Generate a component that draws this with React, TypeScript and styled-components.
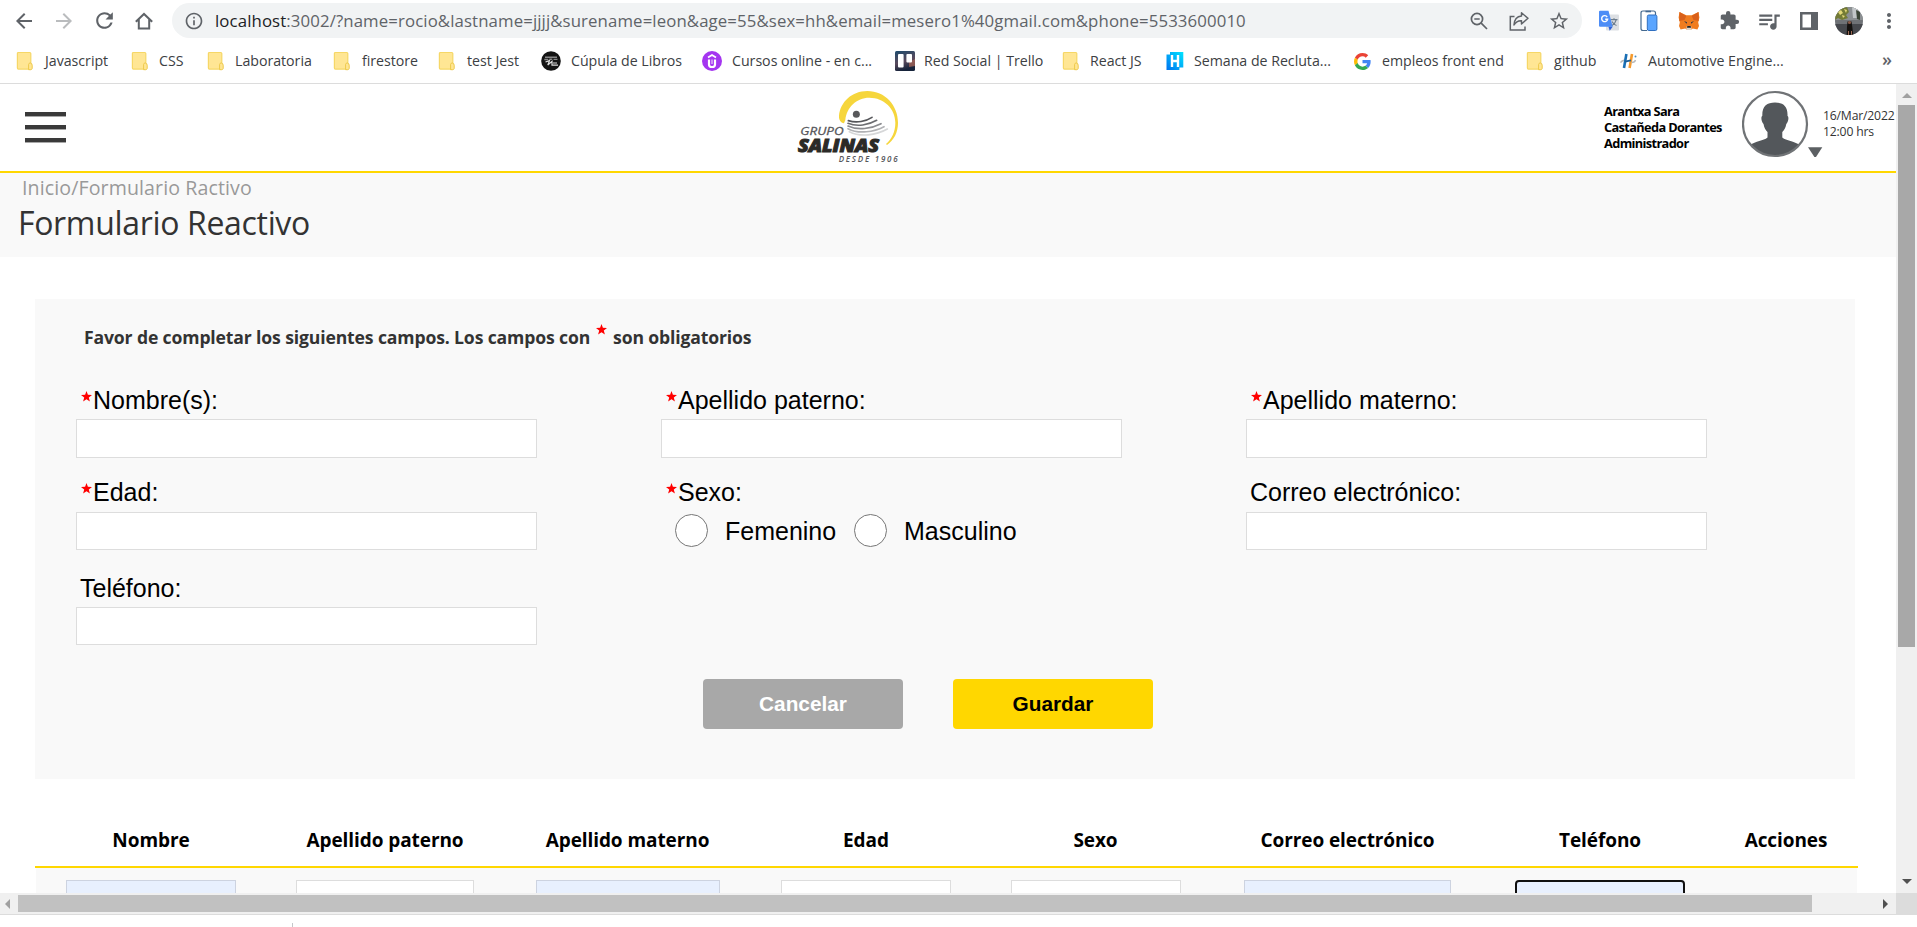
import React from "react";
import styled, { createGlobalStyle } from "styled-components";
import {
  MdArrowBack,
  MdArrowForward,
  MdRefresh,
  MdInfoOutline,
  MdStarBorder,
  MdExtension,
  MdQueueMusic,
  MdMoreVert,
} from "react-icons/md";

const UI = `"Open Sans", "Noto Sans", sans-serif`;
const ARIAL = `"Liberation Sans", Arial, sans-serif`;
const GOLD = "#ffd700";

const GlobalStyle = createGlobalStyle`
  * { box-sizing: border-box; }
  html, body { margin: 0; padding: 0; background: #fff; overflow: hidden; }
  svg { display: block; flex: none; }
`;

const Window = styled.div`
  width: 1917px;
  height: 927px;
  display: flex;
  flex-direction: column;
  overflow: hidden;
  background: #fff;
  font-family: ${UI};
`;

/* ---------- browser chrome ---------- */

const Toolbar = styled.div`
  height: 41px;
  display: flex;
  align-items: center;
  padding-left: 4px;
  color: #5f6368;
`;

const Slot = styled.div<{ $dim?: boolean }>`
  width: 40px;
  height: 41px;
  flex: none;
  display: flex;
  align-items: center;
  justify-content: center;
  color: ${(p) => (p.$dim ? "#babcbe" : "#5f6368")};
`;

const Omnibox = styled.div`
  width: 1410px;
  height: 35px;
  margin: 0 7px 0 8px;
  padding: 0 3px 0 12px;
  display: flex;
  align-items: center;
  border-radius: 18px;
  background: #f1f3f4;
`;

const Url = styled.div`
  flex: 1;
  margin-left: 11px;
  font-size: 16.8px;
  line-height: 34px;
  letter-spacing: 0.11px;
  white-space: nowrap;
  color: #5f6368;
  b { font-weight: 400; color: #202124; }
`;

const BookmarksBar = styled.div`
  height: 43px;
  flex: none;
  display: flex;
  padding: 9px 25px 0 16px;
  border-bottom: 1px solid #dcdcdc;
`;

const Bookmark = styled.div<{ $width: number; $gap: number }>`
  width: ${(p) => p.$width}px;
  height: 22px;
  flex: none;
  display: flex;
  align-items: center;
  gap: ${(p) => p.$gap}px;
  font-size: 14.2px;
  line-height: 22px;
  letter-spacing: -0.02px;
  white-space: nowrap;
  color: #3c4043;
`;

const Overflow = styled.div`
  margin-left: auto;
  font-size: 18px;
  line-height: 19px;
  font-weight: 600;
  color: #5f6368;
`;

/* ---------- viewport and scrollbars ---------- */

const Viewport = styled.div`
  height: 809px;
  flex: none;
  display: flex;
`;

const Page = styled.div`
  width: 1896px;
  height: 809px;
  overflow: hidden;
  display: flex;
  flex-direction: column;
`;

const VScroll = styled.div`
  width: 21px;
  height: 809px;
  padding: 8px 2px 9px 2px;
  display: flex;
  flex-direction: column;
  align-items: center;
  background: #f0f0f0;
`;

const VThumb = styled.div`
  width: 17px;
  height: 542px;
  margin: 7px 0 auto;
  background: #a8a8a8;
`;

const HScroll = styled.div`
  height: 22px;
  flex: none;
  display: flex;
  border-bottom: 1px solid #dcdcdc;
  background: #f0f0f0;
`;

const HTrack = styled.div`
  width: 1896px;
  display: flex;
  align-items: center;
  justify-content: space-between;
  padding: 0 8px 0 5px;
`;

const HThumb = styled.div`
  width: 1794px;
  height: 17px;
  margin: 0 auto 0 8px;
  background: #c1c1c1;
`;

const ScrollCorner = styled.div`
  width: 21px;
  height: 22px;
  background: #dcdcdc;
`;

const DownloadShelf = styled.div`
  height: 12px;
  padding: 8px 0 0 292px;
`;

const ShelfDivider = styled.div`
  width: 1px;
  height: 4px;
  background: #c4c7ca;
`;

/* ---------- app header ---------- */

const Header = styled.header`
  height: 89px;
  flex: none;
  padding-bottom: 0;
  display: flex;
  border-bottom: 2px solid ${GOLD};
`;

const MenuButton = styled.div`
  width: 66px;
  padding: 28px 0 0 25px;
  display: flex;
  flex-direction: column;
  gap: 8px;
`;

const MenuBar = styled.span`
  height: 5px;
  background: linear-gradient(#3a3a3a 75%, #a8a8a8 75%);
`;

const LogoBox = styled.div`
  width: 180px;
  margin: -4px 0 0 714px;
`;

const UserName = styled.div`
  width: 138px;
  margin-left: 644px;
  padding-top: 19px;
  font-size: 12.8px;
  font-weight: 700;
  line-height: 16px;
  letter-spacing: -0.65px;
  white-space: nowrap;
  color: #000;
`;

const UserPicture = styled.div`
  width: 81px;
  padding-top: 6px;
`;

const DateTime = styled.div`
  padding-top: 24px;
  font-size: 12.2px;
  line-height: 16px;
  letter-spacing: -0.18px;
  white-space: nowrap;
  color: #333;
`;

const TitleBand = styled.div`
  height: 84px;
  flex: none;
  background: #f9f9f9;
`;

const Breadcrumb = styled.div`
  height: 30px;
  padding-left: 22px;
  font-size: 19.6px;
  line-height: 30px;
  letter-spacing: 0.1px;
  white-space: nowrap;
  color: #999;
`;

const Title = styled.h1`
  margin: 0;
  padding-left: 18px;
  font-size: 32px;
  font-weight: 400;
  line-height: 40px;
  letter-spacing: -0.33px;
  white-space: nowrap;
  color: #333;
`;

/* ---------- form ---------- */

const FormCard = styled.form`
  width: 1820px;
  height: 480px;
  flex: none;
  margin: 42px 0 0 35px;
  padding: 23px 0 0 41px;
  background: #f9f9f9;
`;

const Hint = styled.div`
  display: flex;
  align-items: center;
  height: 30px;
  padding-left: 8px;
  font-size: 17.6px;
  font-weight: 700;
  letter-spacing: -0.14px;
  white-space: nowrap;
  color: #333;
  svg { margin: -15px 6px 0 6px; }
`;

const Fields = styled.div`
  display: grid;
  grid-template-columns: 585px 585px 461px;
  grid-template-rows: 93px 95px 92px;
  padding-top: 34px;
`;

const Field = styled.div`
  width: 461px;
  display: flex;
  flex-direction: column;
`;

const Label = styled.label<{ $raised?: boolean }>`
  height: 33px;
  display: flex;
  padding-left: 4px;
  font-family: ${ARIAL};
  font-size: 25px;
  line-height: ${(p) => (p.$raised ? 26 : 28)}px;
  white-space: nowrap;
  color: #000;
  svg { margin: ${(p) => (p.$raised ? 4 : 5)}px 1px 0 1px; }
`;

const TextBox = styled.div<{ $height: number }>`
  height: ${(p) => p.$height}px;
  border: 1px solid #ddd;
  background: #fff;
`;

const Radios = styled.div`
  height: 37px;
  display: flex;
  align-items: center;
  padding-left: 14px;
  font-family: ${ARIAL};
  font-size: 25px;
  color: #000;
`;

const Radio = styled.span`
  width: 33px;
  height: 33px;
  margin-right: 17px;
  border: 1px solid #767676;
  border-radius: 50%;
  background: #fff;
`;

const RadioText = styled.span`
  width: 129px;
  line-height: 36px;
`;

const Actions = styled.div`
  display: flex;
  gap: 50px;
  padding: 13px 0 0 627px;
`;

const Button = styled.div<{ $primary?: boolean }>`
  width: 200px;
  height: 50px;
  border-radius: 4px;
  background: ${(p) => (p.$primary ? GOLD : "#a8a8a8")};
  color: ${(p) => (p.$primary ? "#000" : "#fff")};
  font-family: ${ARIAL};
  font-size: 20.8px;
  font-weight: 700;
  line-height: 50px;
  text-align: center;
`;

/* ---------- table ---------- */

const Columns = styled.div`
  display: grid;
  grid-template-columns: 230px 238px 247px 230px 229px 275px 230px 142px;
  justify-items: center;
`;

const HeadRow = styled(Columns)`
  width: 1823px;
  height: 89px;
  flex: none;
  margin-left: 35px;
  padding: 46px 0 0 1px;
  border-bottom: 2px solid ${GOLD};
  font-size: 19px;
  font-weight: 700;
  line-height: 31px;
  letter-spacing: -0.08px;
  white-space: nowrap;
  color: #000;
`;

const BodyRow = styled(Columns)`
  width: 1821px;
  height: 60px;
  flex: none;
  margin-left: 36px;
  padding-top: 12px;
  background: #f9f9f9;
`;

const CellInput = styled.div<{ $width: number; $state: string }>`
  width: ${(p) => p.$width}px;
  height: 38px;
  border: ${(p) =>
    p.$state === "focus" ? "2px solid #101010" : p.$state === "filled" ? "1px solid #cdd3e0" : "1px solid #ddd"};
  border-radius: ${(p) => (p.$state === "focus" ? "4px" : "0")};
  background: ${(p) => (p.$state === "plain" ? "#fff" : "#e8f0fe")};
`;

/* ---------- drawings ---------- */

const HomeIcon = () => (
  <svg width="20" height="20" viewBox="0 0 20 20" fill="none" stroke="#5f6368" strokeWidth="2">
    <path d="M1.800 10.800L10 3l8.200 7.800M4.800 8.500V17.500h10.400V8.500" />
  </svg>
);

const ZoomOutIcon = () => (
  <svg width="20" height="20" viewBox="0 0 20 20" fill="none" stroke="#5f6368" strokeWidth="1.700">
    <circle cx="8" cy="8" r="5.600" />
    <path d="M12.200 12.200L18 18M5.300 8h5.400" />
  </svg>
);

const FolderIcon = () => (
  <svg width="18" height="20" viewBox="0 0 18 20">
    <rect x="1.4" y="1.5" width="13.4" height="16.6" rx="1" fill="#ffe694" stroke="#f6d767" strokeWidth="1.2" />
    <path d="M12.6 13.4q.3-1.4 1.600-1.500 2 .3 2 2.400v3.200q-.2 1-1.500 1.200h-2.100z" fill="#ffe694" stroke="#eec94a" strokeWidth="1" />
  </svg>
);

const CupulaIcon = () => (
  <svg width="20" height="20" viewBox="0 0 20 20">
    <circle cx="10" cy="10" r="9.8" fill="#141414" />
    <path d="M4 6.2h12M3.3 8.5h4M8.3 8.3h3M12.5 8.4h4" stroke="#888" strokeWidth="1.4" />
    <path d="M4.5 11l4-1.400L6.800 14l4.200-3.600v3.800h6M12 12h4" fill="none" stroke="#ddd" strokeWidth="1.2" />
  </svg>
);

const CursosIcon = () => (
  <svg width="20" height="20" viewBox="0 0 20 20">
    <circle cx="10" cy="10" r="10" fill="#a435f0" />
    <path d="M6 6.400L10 4l4 2.400" fill="none" stroke="#fff" strokeWidth="1.800" />
    <path d="M7 8.400v5q0 2.600 3 2.600t3-2.600v-5" fill="none" stroke="#fff" strokeWidth="2.200" />
    <path d="M10 8.500v4.500" stroke="#e9d0fb" strokeWidth="1.200" />
  </svg>
);

const TrelloIcon = () => (
  <svg width="20" height="20" viewBox="0 0 20 20">
    <defs>
      <linearGradient id="dusk" x1="0" y1="0" x2="0.3" y2="1">
        <stop offset="0" stopColor="#1d4a6c" />
        <stop offset="0.6" stopColor="#5a4a5c" />
        <stop offset="1" stopColor="#16233a" />
      </linearGradient>
    </defs>
    <rect width="20" height="20" rx="1.5" fill="url(#dusk)" />
    <path d="M14 11l6-3v7l-6 1z" fill="#b06a5a" opacity=".7" />
    <rect x="3" y="3" width="5.6" height="13.6" rx="1" fill="#fff" />
    <rect x="11.4" y="3" width="5.6" height="8.6" rx="1" fill="#fff" />
  </svg>
);

const HIcon = () => (
  <svg width="18" height="20" viewBox="0 0 18 20">
    <defs>
      <linearGradient id="sky" x1="1" y1="0" x2="0" y2="1">
        <stop offset="0" stopColor="#00e5ff" />
        <stop offset="1" stopColor="#0072f0" />
      </linearGradient>
    </defs>
    <path d="M0.5 3.5H4V1h13.300v15.400H13.400V19H.5z" fill="url(#sky)" />
    <path d="M6 4v12M12 4v12M6 10h6" stroke="#fff" strokeWidth="2.4" />
  </svg>
);

const GoogleIcon = () => (
  <svg width="17" height="17" viewBox="0 0 48 48">
    <path fill="#EA4335" d="M24 9.5c3.54 0 6.71 1.22 9.21 3.6l6.85-6.85C35.9 2.38 30.47 0 24 0 14.62 0 6.51 5.38 2.56 13.22l7.98 6.19C12.43 13.72 17.74 9.5 24 9.5z" />
    <path fill="#4285F4" d="M46.98 24.55c0-1.57-.15-3.09-.38-4.55H24v9.02h12.94c-.58 2.96-2.26 5.48-4.78 7.18l7.73 6c4.51-4.18 7.09-10.36 7.09-17.65z" />
    <path fill="#FBBC05" d="M10.53 28.59c-.48-1.45-.76-2.99-.76-4.59s.27-3.14.76-4.59l-7.98-6.19C.92 16.46 0 20.12 0 24c0 3.88.92 7.54 2.56 10.78l7.97-6.19z" />
    <path fill="#34A853" d="M24 48c6.48 0 11.93-2.13 15.89-5.81l-7.73-6c-2.15 1.45-4.92 2.3-8.16 2.3-6.26 0-11.57-4.22-13.47-9.91l-7.98 6.19C6.51 42.62 14.62 48 24 48z" />
  </svg>
);

const AutomotiveIcon = () => (
  <svg width="18" height="18" viewBox="0 0 18 18">
    <path d="M6.400 2L4 16" stroke="#1a6fb5" strokeWidth="2.600" />
    <path d="M12 2L9.600 16" stroke="#f59a2d" strokeWidth="2.600" />
    <path d="M4.800 9.700L11 8.300" stroke="#1a5f9a" strokeWidth="1.800" />
    <path d="M.5 10.500Q2 8.500 4 8.200M11.500 10.500q3.500 0 4-2.500" fill="none" stroke="#b7b9bb" strokeWidth="1.400" />
    <circle cx="15.500" cy="4.500" r="1" fill="#4b8ec4" />
  </svg>
);

const ShareIcon = () => (
  <svg width="22" height="22" viewBox="0 0 22 22" fill="none" stroke="#5f6368" strokeWidth="1.500">
    <path d="M6.500 6.500H2.300V20H17V16.500" />
    <path d="M13.500 2.800L20 8.300 13.500 14v-3.300C10.500 10.500 7.800 11.800 6 15 6.300 9.800 9 6.400 13.500 6z" strokeLinejoin="round" />
  </svg>
);

const TranslateIcon = () => (
  <svg width="22" height="22" viewBox="0 0 22 22">
    <rect x="8" y="4.500" width="13" height="16" rx="1" fill="#dcdfe3" />
    <path d="M12.500 9.700h7M16 8.200v1.500M18.300 9.700q-1 4-4.500 6M14 11.500q1.500 3 4.500 4" stroke="#6d7d8d" strokeWidth="1.200" fill="none" />
    <path d="M2 .8h8.500l4.200 16H2q-1 0-1-1V1.800q0-1 1-1z" fill="#4d8df6" />
    <path d="M10.500 16.800h4.200l-3 4z" fill="#2f62d8" />
    <path d="M9.200 7A3 3 0 1 0 9.600 9.300H7.200" fill="none" stroke="#fff" strokeWidth="1.400" />
  </svg>
);

const PhonesIcon = () => (
  <svg width="20" height="22" viewBox="0 0 20 22">
    <path d="M8 20.500H4q-2 0-2-2V3q0-2 2-2h10.500q2 0 2 2v2" fill="#fff" stroke="#44698f" strokeWidth="1.200" />
    <path d="M6.500 1.500h5.500" stroke="#44698f" strokeWidth="1.600" />
    <rect x="8.300" y="5" width="9.600" height="15.500" rx="1.500" fill="#5aa5ff" stroke="#2f6fc0" strokeWidth="1" />
  </svg>
);

const FoxIcon = () => (
  <svg width="22" height="20" viewBox="0 0 22 20">
    <path d="M1.500 1l6.800 3.200h5.400L20.500 1l.9 5.500-1.200 5 .8 3.500-1.600 3.600-4.600-1.100-2.200 1.600H9.400l-2.200-1.600-4.600 1.100L1 15l.8-3.500-1.200-5z" fill="#f07c1e" />
    <path d="M1.500 1l6.800 4-1.800 4-5.200 1z M20.500 1l-6.800 4 1.800 4 5.200 1z" fill="#d9601a" />
    <path d="M6 10l3 1.200-.3 1.500zM16 10l-3 1.200.3 1.500z" fill="#233447" />
    <path d="M8.800 15h4.400l.4 3-1 .9H9.400l-1-.9z" fill="#e0d4c8" />
    <path d="M9.300 15h3.400l.3 1.800H9z" fill="#232323" />
  </svg>
);

const PanelIcon = () => (
  <svg width="18" height="18" viewBox="0 0 18 18">
    <path fillRule="evenodd" d="M0 0h18v18H0zM2.500 2.500v13H11v-13z" fill="#5f6368" />
  </svg>
);

const ProfilePhoto = () => (
  <svg width="28" height="28" viewBox="0 0 28 28">
    <defs>
      <clipPath id="round">
        <circle cx="14" cy="14" r="14" />
      </clipPath>
    </defs>
    <g clipPath="url(#round)">
      <rect width="28" height="28" fill="#6f7276" />
      <rect width="28" height="13" fill="#8c9093" />
      <path d="M17 0h5l1 11h-5z" fill="#c2c6c8" />
      <path d="M0 4l6-4h6l2 5-3 3 2 3-6 2-4-2-3 2z" fill="#737b35" />
      <path d="M3 5l3-2 2 3-3 2zM9 2l3 1-1 3zM7 8l3 1-2 2z" fill="#e3d878" />
      <path d="M21 3l4 2v8l-3-1z" fill="#3c4638" />
      <path d="M0 17h28v11H0z" fill="#46484d" />
      <path d="M12.500 14.500h4l.6 4 1.200 9.500h-6.600l.3-8z" fill="#14110f" />
      <circle cx="14.500" cy="15.500" r="1.600" fill="#8a5a48" />
      <path d="M13 24h1v4h-1zM16 24h1v4h-1z" fill="#9c6a56" />
    </g>
  </svg>
);

const StarMark = () => (
  <svg width="11" height="11" viewBox="0 0 11 11">
    <path d="M5.500 0L6.900 3.800 11 4 7.800 6.500 8.900 10.600 5.500 8.300 2.100 10.600 3.200 6.500 0 4 4.100 3.800z" fill="#f00" />
  </svg>
);

const ScrollArrow = ({ d, color, w = 10, h = 10 }: { d: string; color: string; w?: number; h?: number }) => (
  <svg width={w} height={h} viewBox={`0 0 ${w} ${h}`}>
    <path d={d} fill={color} />
  </svg>
);

const Logo = () => (
  <svg width="140" height="90" viewBox="0 0 420 270">
    <path
      d="M192 130C182 128 176 119 177 107C181 66 216 33 262 33C315 33 354 76 354 128C354 157 342 180 321 195L318 192C336 176 346 154 346 128C346 86 312 53 268 53C229 53 200 82 196 120Z"
      fill="#f6d63c"
    />
    <circle cx="229" cy="103" r="10.500" fill="#58595b" />
    <g fill="none" strokeLinecap="round">
      <path d="M205 122C230 130 258 124 276 112" stroke="#55565a" strokeWidth="5" />
      <path d="M204 130C232 141 266 135 290 121" stroke="#6b6c70" strokeWidth="5" />
      <path d="M204 138C234 152 274 146 303 131" stroke="#8a8b8f" strokeWidth="5" />
      <path d="M204 146C236 163 282 156 312 140" stroke="#b1b2b5" strokeWidth="5" />
      <path d="M208 155C240 172 288 166 322 147" stroke="#d6d7d8" strokeWidth="5" />
    </g>
    <g fontFamily='"Open Sans", sans-serif' fontStyle="italic">
      <text x="61" y="164" fontSize="34" fill="#55565a" stroke="#55565a" strokeWidth=".8" textLength="130" lengthAdjust="spacingAndGlyphs">GRUPO</text>
      <text x="54" y="215" fontSize="53" fontWeight="800" fill="#2b2a27" stroke="#2b2a27" strokeWidth="3" textLength="243" lengthAdjust="spacingAndGlyphs">SALINAS</text>
      <text x="176" y="246" fontSize="24" fontWeight="600" fill="#55565a" textLength="177" lengthAdjust="spacing">DESDE 1906</text>
    </g>
  </svg>
);

const Avatar = () => (
  <svg width="81" height="68" viewBox="0 0 81 68">
    <defs>
      <clipPath id="face">
        <circle cx="33" cy="34" r="32" />
      </clipPath>
    </defs>
    <g clipPath="url(#face)" fill="#53575b">
      <path d="M33 12.500C41 12.500 46 16 45.500 26c1.600.4 1 6-1.200 8-.8 4-2 6-4 8v5.500c4 3.500 12 3.500 17.500 7.500V68H8V55c5.500-4 13.500-4 17.500-7.500V42c-2-2-3.200-4-4-8-2.200-2-2.800-7.600-1.200-8C20 16 25 12.500 33 12.500z" />
    </g>
    <circle cx="33" cy="34" r="32" fill="none" stroke="#707376" strokeWidth="2.200" />
    <path d="M66 57.300h14.300L74 67h-1.600z" fill="#5c6063" />
  </svg>
);

/* ---------- data ---------- */

const bookmarks: { icon: React.ReactNode; label: string; width: number; gap: number }[] = [
  { icon: <FolderIcon />, label: "Javascript", width: 115, gap: 11 },
  { icon: <FolderIcon />, label: "CSS", width: 76, gap: 10 },
  { icon: <FolderIcon />, label: "Laboratoria", width: 126, gap: 10 },
  { icon: <FolderIcon />, label: "firestore", width: 105, gap: 11 },
  { icon: <FolderIcon />, label: "test Jest", width: 103, gap: 11 },
  { icon: <CupulaIcon />, label: "Cúpula de Libros", width: 161, gap: 10 },
  { icon: <CursosIcon />, label: "Cursos online - en c...", width: 193, gap: 10 },
  { icon: <TrelloIcon />, label: "Red Social | Trello", width: 167, gap: 9 },
  { icon: <FolderIcon />, label: "React JS", width: 104, gap: 10 },
  { icon: <HIcon />, label: "Semana de Recluta...", width: 188, gap: 10 },
  { icon: <GoogleIcon />, label: "empleos front end", width: 172, gap: 11 },
  { icon: <FolderIcon />, label: "github", width: 94, gap: 10 },
  { icon: <AutomotiveIcon />, label: "Automotive Engine...", width: 180, gap: 10 },
];

const columns: { label: string; width?: number; state?: string }[] = [
  { label: "Nombre", width: 170, state: "filled" },
  { label: "Apellido paterno", width: 178, state: "plain" },
  { label: "Apellido materno", width: 184, state: "filled" },
  { label: "Edad", width: 170, state: "plain" },
  { label: "Sexo", width: 170, state: "plain" },
  { label: "Correo electrónico", width: 207, state: "filled" },
  { label: "Teléfono", width: 170, state: "focus" },
  { label: "Acciones" },
];

interface InputFieldProps {
  label: string;
  required?: boolean;
  raised?: boolean;
  height?: number;
}

const InputField = ({ label, required, raised, height = 38 }: InputFieldProps) => (
  <Field>
    <Label $raised={raised}>
      {required && <StarMark />}
      {label}
    </Label>
    <TextBox $height={height} />
  </Field>
);

export default function App() {
  return (
    <Window>
      <GlobalStyle />
      <Toolbar>
        <Slot><MdArrowBack size={24} /></Slot>
        <Slot $dim><MdArrowForward size={24} /></Slot>
        <Slot><MdRefresh size={25} /></Slot>
        <Slot><HomeIcon /></Slot>
        <Omnibox>
          <MdInfoOutline size={20} color="#5f6368" />
          <Url>
            <b>localhost</b>:3002/?name=rocio&amp;lastname=jjjj&amp;surename=leon&amp;age=55&amp;sex=hh&amp;email=mesero1%40gmail.com&amp;phone=5533600010
          </Url>
          <Slot><ZoomOutIcon /></Slot>
          <Slot><ShareIcon /></Slot>
          <Slot><MdStarBorder size={22} /></Slot>
        </Omnibox>
        <Slot><TranslateIcon /></Slot>
        <Slot><PhonesIcon /></Slot>
        <Slot><FoxIcon /></Slot>
        <Slot><MdExtension size={21} /></Slot>
        <Slot><MdQueueMusic size={26} /></Slot>
        <Slot><PanelIcon /></Slot>
        <Slot><ProfilePhoto /></Slot>
        <Slot><MdMoreVert size={24} /></Slot>
      </Toolbar>

      <BookmarksBar>
        {bookmarks.map((b) => (
          <Bookmark key={b.label} $width={b.width} $gap={b.gap}>
            {b.icon}
            {b.label}
          </Bookmark>
        ))}
        <Overflow>»</Overflow>
      </BookmarksBar>

      <Viewport>
        <Page>
          <Header>
            <MenuButton>
              <MenuBar />
              <MenuBar />
              <MenuBar />
            </MenuButton>
            <LogoBox><Logo /></LogoBox>
            <UserName>
              Arantxa Sara
              <br />
              Castañeda Dorantes
              <br />
              Administrador
            </UserName>
            <UserPicture><Avatar /></UserPicture>
            <DateTime>
              16/Mar/2022
              <br />
              12:00 hrs
            </DateTime>
          </Header>

          <TitleBand>
            <Breadcrumb>Inicio/Formulario Ractivo</Breadcrumb>
            <Title>Formulario Reactivo</Title>
          </TitleBand>

          <FormCard>
            <Hint>
              Favor de completar los siguientes campos. Los campos con
              <StarMark />
              son obligatorios
            </Hint>
            <Fields>
              <InputField label="Nombre(s):" required height={39} />
              <InputField label="Apellido paterno:" required height={39} />
              <InputField label="Apellido materno:" required height={39} />
              <InputField label="Edad:" required raised />
              <Field>
                <Label $raised>
                  <StarMark />
                  Sexo:
                </Label>
                <Radios>
                  <Radio />
                  <RadioText>Femenino</RadioText>
                  <Radio />
                  <RadioText>Masculino</RadioText>
                </Radios>
              </Field>
              <InputField label="Correo electrónico:" raised />
              <InputField label="Teléfono:" />
            </Fields>
            <Actions>
              <Button>Cancelar</Button>
              <Button $primary>Guardar</Button>
            </Actions>
          </FormCard>

          <HeadRow>
            {columns.map((c) => (
              <span key={c.label}>{c.label}</span>
            ))}
          </HeadRow>
          <BodyRow>
            {columns.map((c) =>
              c.width ? <CellInput key={c.label} $width={c.width} $state={c.state ?? "plain"} /> : <span key={c.label} />
            )}
          </BodyRow>
        </Page>
        <VScroll>
          <ScrollArrow d="M0 6L5 1l5 5z" color="#a0a0a0" h={6} />
          <VThumb />
          <ScrollArrow d="M0 0h10L5 5z" color="#505050" h={5} />
        </VScroll>
      </Viewport>

      <HScroll>
        <HTrack>
          <ScrollArrow d="M5 0v10L0 5z" color="#a0a0a0" w={5} />
          <HThumb />
          <ScrollArrow d="M0 0v10l5-5z" color="#505050" w={5} />
        </HTrack>
        <ScrollCorner />
      </HScroll>
      <DownloadShelf>
        <ShelfDivider />
      </DownloadShelf>
    </Window>
  );
}
